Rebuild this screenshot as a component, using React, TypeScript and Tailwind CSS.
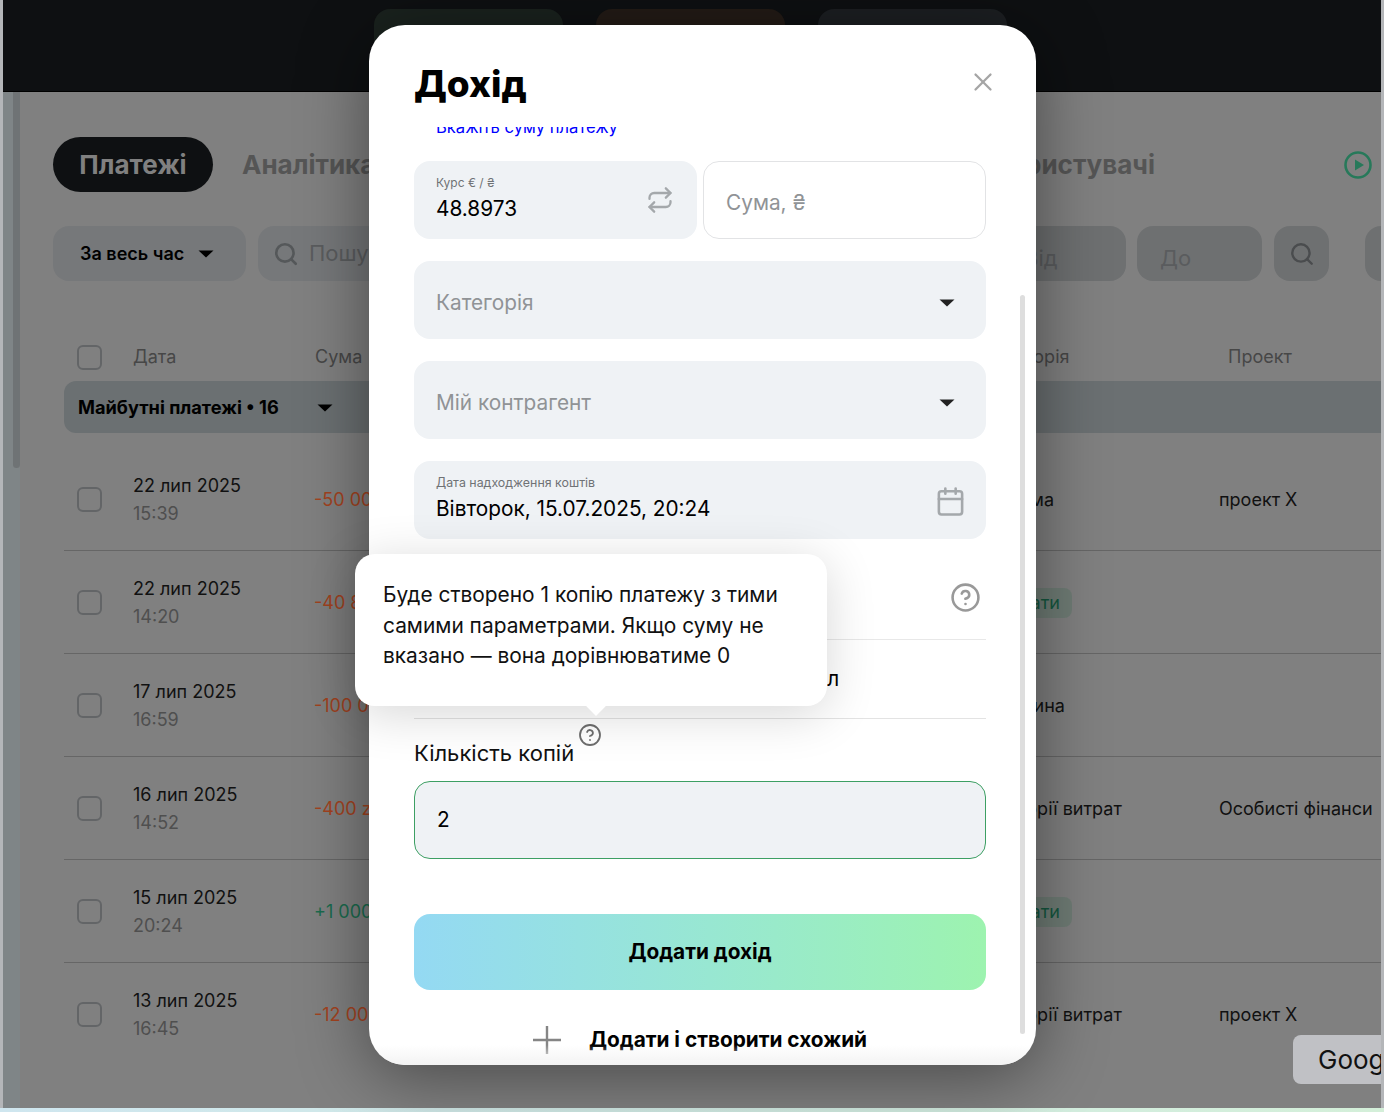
import React from "react";
import { Calendar, CircleHelp, Repeat, Search, X } from "lucide-react";

const rows = [
  { date: "22 лип 2025", time: "15:39", amount: "-50 000 zł", category: "Реклама", project: "проект X" },
  { date: "22 лип 2025", time: "14:20", amount: "-40 800 zł", badge: "Вказати" },
  { date: "17 лип 2025", time: "16:59", amount: "-100 000 zł", category: "Половина" },
  { date: "16 лип 2025", time: "14:52", amount: "-400 zł", category: "Категорії витрат", project: "Особисті фінанси" },
  { date: "15 лип 2025", time: "20:24", amount: "+1 000 €", badge: "Вказати" },
  { date: "13 лип 2025", time: "16:45", amount: "-12 000 zł", category: "Категорії витрат", project: "проект X" },
];

const fieldCls = "h-[78px] rounded-2xl bg-[#eff2f5] px-[22px] flex items-center justify-between";

function Caret({ className = "" }: { className?: string }) {
  return (
    <svg width="16" height="8" viewBox="0 0 16 8" className={className}>
      <path d="M0.5 0.5h15L8 7.5z" fill="currentColor" />
    </svg>
  );
}

function Checkbox() {
  return <div className="w-[25px] h-[25px] rounded-md border-2 border-[#636567]" />;
}

function Payments() {
  return (
    <div className="ml-[11px]">
      <div className="mt-[62px] mb-[13px] grid grid-cols-[69px_182px_670px_234px_1fr] items-center h-[25px] text-lg text-[#474747]">
        <div className="pl-[13px]">
          <Checkbox />
        </div>
        <div>Дата</div>
        <div>Сума</div>
        <div>Категорія</div>
        <div className="pl-[9px]">Проект</div>
      </div>

      <div className="h-[52px] mb-[15px] rounded-l-xl bg-[#6b7072] pl-[14px] pt-px flex items-center text-black">
        <span className="text-[18.2px] font-bold">Майбутні платежі • 16</span>
        <Caret className="ml-[38px]" />
      </div>

      {rows.map((r, i) => (
        <div
          key={r.time}
          className={`grid grid-cols-[69px_182px_670px_234px_1fr] items-center text-lg text-[#111] ${
            i < rows.length - 1 ? "h-[103px] border-b border-[#666]" : "h-[102px]"
          }`}
        >
          <div className="pl-[13px]">
            <Checkbox />
          </div>
          <div className="pt-[2px] leading-7">
            <div>{r.date}</div>
            <div className="text-[#4f4f4f]">{r.time}</div>
          </div>
          <div className={`pt-[2px] -ml-px ${r.amount.startsWith("+") ? "text-[#1a6b4e]" : "text-[#a3431f]"}`}>
            {r.amount}
          </div>
          <div className="pt-[2px] -ml-[7px] whitespace-nowrap">
            {r.badge ? (
              <span className="inline-block rounded-lg bg-[#6f7c75] px-3 py-[1px] text-[#14573f]">{r.badge}</span>
            ) : (
              r.category
            )}
          </div>
          <div className="pt-[2px] whitespace-nowrap">{r.project}</div>
        </div>
      ))}
    </div>
  );
}

function Page() {
  return (
    <div className="h-[1108px] mx-[3px] bg-[#808080] flex flex-col overflow-hidden">
      <div className="h-[92px] shrink-0 bg-[#0e1012] border-b border-black pt-[9px] pl-[371px] flex gap-[33px] overflow-hidden">
        <div className="w-[189px] h-[70px] rounded-2xl bg-[#1a221e]" />
        <div className="w-[189px] h-[70px] rounded-2xl bg-[#231b16]" />
        <div className="w-[189px] h-[70px] rounded-2xl bg-[#1c1f22]" />
      </div>

      <div className="flex-1 flex min-h-0">
        <div className="w-[17px] shrink-0 bg-[#7f8587]">
          <div className="ml-[10px] w-[7px] h-[376px] rounded-b bg-[#6f7375]" />
        </div>

        <div className="flex-1 min-w-0 pl-[33px] overflow-hidden">
          <div className="mt-[45px] h-[55px] flex items-center pr-[9px]">
            <div className="w-[160px] h-[55px] rounded-full bg-[#0e1012] flex items-center justify-center text-[26px] font-bold text-[#808080]">
              Платежі
            </div>
            <div className="ml-[29px] text-[26px] font-bold text-[#555]">Аналітика</div>
            <div className="ml-auto text-[26px] font-bold text-[#555]">Користувачі</div>
            <svg width="28" height="28" viewBox="0 0 28 28" className="ml-[189px] text-[#27795a]">
              <circle cx="14" cy="14" r="12.5" fill="none" stroke="currentColor" strokeWidth="2.6" />
              <path d="M11 8.5v11l9-5.500z" fill="currentColor" />
            </svg>
          </div>

          <div className="mt-[34px] h-[55px] flex text-[22px] text-[#5a5c5e] w-[1400px]">
            <div className="w-[193px] rounded-2xl bg-[#76787a] pl-[27px] flex items-center text-lg font-semibold text-black">
              За весь час
              <Caret className="ml-[14px]" />
            </div>
            <div className="ml-[12px] w-[740px] rounded-2xl bg-[#76787a] pl-[15px] flex items-center gap-[10px]">
              <Search size={26} strokeWidth={2.4} className="text-[#55585a]" />
              Пошук
            </div>
            <div className="ml-[3px] w-[125px] rounded-2xl bg-[#6e7071] pt-[9px] pl-[23px] flex items-center">Від</div>
            <div className="ml-[11px] w-[125px] rounded-2xl bg-[#6e7071] pt-[9px] pl-[23px] flex items-center">До</div>
            <div className="ml-[12px] w-[55px] rounded-2xl bg-[#6e7071] flex items-center justify-center">
              <Search size={26} strokeWidth={2.2} className="text-[#4a4c4e]" />
            </div>
            <div className="ml-[36px] w-[55px] rounded-2xl bg-[#6e7071]" />
          </div>

          <Payments />
        </div>
      </div>
    </div>
  );
}

function IncomeModal() {
  return (
    <div className="absolute left-[369px] top-[25px] w-[667px] h-[1040px] rounded-[36px] bg-white overflow-hidden shadow-[0_10px_70px_rgba(0,0,0,0.45)]">
      <div className="h-[102px] pl-[45px] pr-[50px] flex items-start justify-between">
        <h1 className="mt-[33px] text-[37px] leading-[52px] font-extrabold text-black">Дохід</h1>
        <X size={30} strokeWidth={1.8} className="mt-[42px] -mr-[12px] text-[#a5a5a5]" />
      </div>

      <div className="h-[938px] overflow-hidden pl-[45px] pr-[50px]">
        <p className="-mt-[10px] h-5 pl-[22px] text-[16.6px] leading-5 text-[#0000ff]">Вкажіть суму платежу</p>

        <div className="mt-[24px] flex gap-[6px]">
          <div className={`w-[283px] ${fieldCls}`}>
            <div>
              <div className="-mt-[2px] text-xs leading-4 text-[#6f7275]">Курс € / ₴</div>
              <div className="mt-[4px] text-[20.8px] leading-7 text-black">48.8973</div>
            </div>
            <Repeat size={28} strokeWidth={2} className="mr-px text-[#a4a8ab]" />
          </div>
          <div className="w-[283px] h-[78px] rounded-2xl border border-[#e2e3e5] pt-[5px] px-[22px] flex items-center text-[20.8px] text-[#909396]">
            Сума, ₴
          </div>
        </div>

        <div className={`mt-[22px] pt-[6px] text-[20.8px] text-[#909396] ${fieldCls}`}>
          Категорія
          <Caret className="mr-[9px] text-[#222]" />
        </div>
        <div className={`mt-[22px] pt-[6px] text-[20.8px] text-[#909396] ${fieldCls}`}>
          Мій контрагент
          <Caret className="mr-[9px] text-[#222]" />
        </div>
        <div className={`mt-[22px] ${fieldCls}`}>
          <div>
            <div className="-mt-[2px] text-[12.4px] leading-4 text-[#6f7275]">Дата надходження коштів</div>
            <div className="mt-[4px] text-[20.8px] leading-7 text-black">Вівторок, 15.07.2025, 20:24</div>
          </div>
          <Calendar size={31} strokeWidth={2} className="mt-[2px] -mr-[2px] text-[#a4a8ab]" />
        </div>

        <div className="mt-[22px] h-[79px] pb-[5px] border-b border-[#e8e8e8] flex items-center justify-between text-[20.8px] text-black">
          Копія платежу
          <CircleHelp size={31} strokeWidth={2} className="mr-[5px] text-[#999]" />
        </div>
        <div className="h-[79px] border-b border-[#e3e3e3] flex items-center text-[20.8px] text-black whitespace-nowrap">
          Створити копії платежу через 12 інтервал
        </div>

        <div className="mt-[19px] flex items-start text-[22px] leading-7 text-[#111]">
          <span className="mt-[1px]">Кількість копій</span>
          <CircleHelp size={24} strokeWidth={1.8} className="-mt-[15px] ml-[4px] text-[#6d6d6d]" />
        </div>
        <div className="mt-[14px] h-[78px] rounded-2xl border border-[#3d9f63] bg-[#eff2f5] px-[22px] flex items-center text-[20.8px] text-black">
          2
        </div>

        <button className="mt-[55px] w-full h-[76px] rounded-2xl bg-gradient-to-r from-[#94d9f3] to-[#9df3af] text-[20.8px] font-bold text-black">
          Додати дохід
        </button>
        <div className="mt-[27px] h-[46px] flex items-center justify-center gap-[28px] text-[20.8px] font-bold text-black">
          <svg width="28" height="28" viewBox="0 0 28 28" className="text-[#858585]">
            <path d="M14 0v28M0 14h28" stroke="currentColor" strokeWidth="2.4" />
          </svg>
          Додати і створити схожий
        </div>
      </div>

      {/* scrollbar + bottom fade */}
      <div className="absolute right-[11px] top-[270px] w-[5px] h-[739px] rounded-full bg-[#dedede]" />
      <div className="absolute inset-x-0 bottom-0 h-[20px] bg-gradient-to-b from-white/0 to-[#f3f3f3]" />
    </div>
  );
}

export default function App() {
  return (
    <div className="relative w-[1384px] h-[1112px] overflow-hidden bg-[#b4b6b9] font-[Inter,sans-serif]">
      <Page />
      <div className="h-[4px] bg-gradient-to-r from-[#cfe6ef] to-[#d4efd9]" />

      <IncomeModal />

      {/* tooltip over the copies field */}
      <div className="absolute left-[355px] top-[554px] w-[472px] h-[152px] rounded-[20px] bg-white px-[28px] pt-[26px] text-[20.9px] leading-[30.5px] text-[#111] shadow-[0_8px_50px_rgba(0,0,0,0.16)]">
        Буде створено 1 копію платежу з тими самими параметрами. Якщо суму не вказано — вона дорівнюватиме 0
        <div className="absolute left-[234px] -bottom-[7px] w-[14px] h-[14px] rotate-45 bg-white" />
      </div>

      {/* translate widget */}
      <div className="absolute right-[3px] top-[1035px] w-[88px] h-[49px] rounded-l-lg bg-[#c0c1c5] pl-[25px] overflow-hidden flex items-center text-[26px] text-[#111]">
        Google
      </div>
    </div>
  );
}
